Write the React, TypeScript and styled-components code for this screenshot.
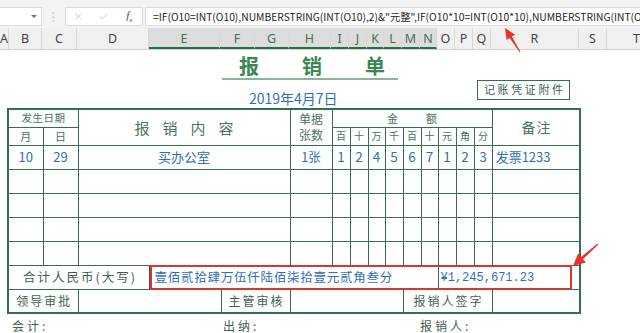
import React from "react";
import styled, { createGlobalStyle } from "styled-components";
import { X, Check } from "lucide-react";

const GlobalStyle = createGlobalStyle`
  html, body { margin: 0; padding: 0; background: #fff; }
  body {
    width: 640px;
    height: 333px;
    overflow: hidden;
    font-family: "Noto Sans CJK SC", "Noto Sans", sans-serif;
  }
`;

const LINE = "#336f50";
const LABEL = "#4a7260";
const BLUE = "#2f70b4";
const INK = "#3f5f4e";

const columns = [
  { name: "A", w: 9 },
  { name: "B", w: 33 },
  { name: "C", w: 35 },
  { name: "D", w: 72 },
  { name: "E", w: 71, sel: true },
  { name: "F", w: 35, sel: true },
  { name: "G", w: 34, sel: true },
  { name: "H", w: 42, sel: true },
  { name: "I", w: 18, sel: true },
  { name: "J", w: 18, sel: true },
  { name: "K", w: 17, sel: true },
  { name: "L", w: 18, sel: true },
  { name: "M", w: 18, sel: true },
  { name: "N", w: 17, sel: true },
  { name: "O", w: 18 },
  { name: "P", w: 18 },
  { name: "Q", w: 18 },
  { name: "R", w: 88 },
  { name: "S", w: 28 },
  { name: "T", w: 60 },
];

// widths of the form's own columns, B through R
const formCols = [35, 35, 72, 71, 35, 34, 42, 18, 18, 17, 18, 18, 17, 18, 18, 18, 88];
const units = ["百", "十", "万", "千", "百", "十", "元", "角", "分"];
const amount = ["1", "2", "4", "5", "6", "7", "1", "2", "3"];

const formula =
  '=IF(O10=INT(O10),NUMBERSTRING(INT(O10),2)&"元整",IF(O10*10=INT(O10*10),NUMBERSTRING(INT(O10)';

const Page = styled.div`
  position: relative;
  width: 640px;
  height: 333px;
  overflow: hidden;
`;

const Toolbar = styled.div`
  display: flex;
  align-items: flex-start;
  height: 28px;
  padding-top: 7px;
  box-sizing: border-box;
  background: #f3f3f3;
`;

const NameBox = styled.div`
  display: flex;
  align-items: center;
  justify-content: flex-end;
  width: 42px;
  height: 19px;
  box-sizing: border-box;
  background: #fff;
  border: 1px solid #dcdcdc;
  border-left: none;
`;

const Caret = styled.span`
  width: 0;
  height: 0;
  margin-right: 4px;
  border-left: 3px solid transparent;
  border-right: 3px solid transparent;
  border-top: 3px solid #707070;
`;

const Dots = styled.div`
  width: 23px;
  height: 19px;
  display: flex;
  align-items: center;
  justify-content: center;
  color: #bdbdbd;
  font: 12px "DejaVu Sans", sans-serif;
`;

const FxBox = styled.div`
  display: flex;
  width: 78px;
  height: 19px;
  box-sizing: border-box;
  background: #fff;
  border: 1px solid #dcdcdc;
`;

const FxSlot = styled.span`
  width: 26px;
  display: flex;
  align-items: center;
  justify-content: center;
  color: #ababab;
`;

const FxLabel = styled.span`
  font: italic 11px "Liberation Serif", serif;
  color: #4a4a4a;
  sub {
    font-size: 7px;
  }
`;

const FormulaBox = styled.div`
  flex: 1;
  height: 19px;
  margin-left: 2px;
  padding-left: 7px;
  box-sizing: border-box;
  background: #fff;
  border: 1px solid #dcdcdc;
  border-right: none;
  font-size: 10.3px;
  line-height: 17px;
  color: #262626;
  white-space: nowrap;
  overflow: hidden;
`;

const HeaderRow = styled.div`
  display: flex;
  height: 22px;
  box-sizing: border-box;
  background: #f0f0f0;
  border-bottom: 1px solid #d2d2d2;
`;

const ColHead = styled.div<{ $w: number; $sel?: boolean }>`
  flex: none;
  width: ${(p) => p.$w}px;
  box-sizing: border-box;
  border-right: 1px solid #d8d8d8;
  border-bottom: ${(p) => (p.$sel ? "2px solid #217346" : "none")};
  background: ${(p) => (p.$sel ? "#dcdcdc" : "transparent")};
  color: ${(p) => (p.$sel ? "#466e58" : "#444")};
  font: 12.5px "Noto Sans", sans-serif;
  line-height: 21px;
  text-align: center;
  overflow: hidden;
`;

const Sheet = styled.div`
  padding-left: 7px;
`;

const TitleArea = styled.div`
  display: grid;
  grid-template-columns: 470px 93px;
  grid-template-rows: 30px 28px;
`;

const Title = styled.div`
  grid-column: 1;
  grid-row: 1;
  align-self: end;
  display: flex;
  justify-content: space-between;
  width: 176px;
  margin-left: 215px;
  padding: 0 13px 0 17px;
  box-sizing: border-box;
  border-bottom: 2px solid #87b797;
  color: #3a8655;
  font-size: 20px;
  font-weight: 700;
  line-height: 25px;
`;

const DateText = styled.div`
  grid-column: 1;
  grid-row: 2;
  align-self: end;
  padding: 0 0 1px 242px;
  color: ${BLUE};
  font-size: 14px;
  line-height: 18px;
`;

const Stamp = styled.div`
  grid-column: 2;
  grid-row: 2;
  align-self: start;
  height: 20px;
  box-sizing: border-box;
  border: 1.5px solid #3c6d51;
  color: #40604f;
  font-size: 11px;
  letter-spacing: 2.6px;
  text-indent: 2.6px;
  line-height: 17px;
  text-align: center;
`;

const TableWrap = styled.div`
  position: relative;
  width: 572px;
`;

const Form = styled.table`
  width: 572px;
  border-collapse: collapse;
  table-layout: fixed;
  border: 2px solid ${LINE};
`;

const Row = styled.tr<{ $h: number }>`
  height: ${(p) => p.$h}px;
`;

const Cell = styled.td<{
  $size?: number;
  $color?: string;
  $spacing?: number;
  $align?: string;
  $leftLine?: string;
}>`
  padding: 0;
  border: 1px solid ${LINE};
  ${(p) => (p.$leftLine ? `border-left: 2px solid ${p.$leftLine};` : "")}
  color: ${(p) => p.$color || LABEL};
  font-size: ${(p) => p.$size || 12}px;
  letter-spacing: ${(p) => p.$spacing || 0}px;
  text-indent: ${(p) => (p.$align === "left" ? 0 : p.$spacing || 0)}px;
  text-align: ${(p) => p.$align || "center"};
  line-height: 1.15;
  white-space: nowrap;
  overflow: hidden;
`;

const StackLine = styled.div`
  height: 16px;
  line-height: 16px;
`;

const Remark = styled.span`
  padding-left: 3px;
`;

const Money = styled.span`
  padding-left: 2px;
  font-family: "Liberation Mono", monospace;
  font-size: 12px;
`;

const RedBox = styled.div`
  position: absolute;
  left: 143px;
  top: 157px;
  width: 422px;
  height: 25px;
  box-sizing: border-box;
  border: 2px solid #d8372f;
  pointer-events: none;
`;

const Footer = styled.div`
  display: grid;
  grid-template-columns: 211px 197px 1fr;
  padding-left: 5px;
  color: ${INK};
  font-size: 12px;
  letter-spacing: 3px;
  line-height: 24px;
`;

const Arrows = styled.svg`
  position: absolute;
  left: 0;
  top: 0;
  pointer-events: none;
`;

export default function App() {
  return (
    <Page>
      <GlobalStyle />
      <Toolbar>
        <NameBox>
          <Caret />
        </NameBox>
        <Dots>⋮</Dots>
        <FxBox>
          <FxSlot>
            <X size={11} strokeWidth={1.3} />
          </FxSlot>
          <FxSlot>
            <Check size={11} strokeWidth={1.3} />
          </FxSlot>
          <FxSlot>
            <FxLabel>
              f<sub>x</sub>
            </FxLabel>
          </FxSlot>
        </FxBox>
        <FormulaBox>{formula}</FormulaBox>
      </Toolbar>

      <HeaderRow>
        {columns.map((c) => (
          <ColHead key={c.name} $w={c.w} $sel={c.sel}>
            {c.name}
          </ColHead>
        ))}
      </HeaderRow>

      <Sheet>
        <TitleArea>
          <Title>
            <span>报</span>
            <span>销</span>
            <span>单</span>
          </Title>
          <DateText>2019年4月7日</DateText>
          <Stamp>记账凭证附件</Stamp>
        </TitleArea>

        <TableWrap>
          <Form>
            <colgroup>
              {formCols.map((w, i) => (
                <col key={i} style={{ width: w }} />
              ))}
            </colgroup>
            <tbody>
              <Row $h={18}>
                <Cell colSpan={2} $size={10.5} $spacing={0.5}>
                  发生日期
                </Cell>
                <Cell colSpan={4} rowSpan={2} $size={15} $spacing={13}>
                  报销内容
                </Cell>
                <Cell rowSpan={2} $size={12}>
                  <StackLine>单据</StackLine>
                  <StackLine>张数</StackLine>
                </Cell>
                <Cell colSpan={9} $size={11} $spacing={28}>
                  金额
                </Cell>
                <Cell rowSpan={2} $size={14} $spacing={1}>
                  备注
                </Cell>
              </Row>
              <Row $h={18}>
                <Cell $size={11}>月</Cell>
                <Cell $size={11}>日</Cell>
                {units.map((u, i) => (
                  <Cell key={i} $size={10}>
                    {u}
                  </Cell>
                ))}
              </Row>
              <Row $h={24}>
                <Cell $size={13} $color={BLUE}>
                  10
                </Cell>
                <Cell $size={13} $color={BLUE}>
                  29
                </Cell>
                <Cell colSpan={4} $size={13} $color={BLUE}>
                  买办公室
                </Cell>
                <Cell $size={12.5} $color={BLUE}>
                  1张
                </Cell>
                {amount.map((d, i) => (
                  <Cell key={i} $size={13.5} $color={BLUE}>
                    {d}
                  </Cell>
                ))}
                <Cell $size={13} $color={BLUE} $align="left">
                  <Remark>发票1233</Remark>
                </Cell>
              </Row>
              {[0, 1, 2, 3].map((r) => (
                <Row key={r} $h={24}>
                  <Cell />
                  <Cell />
                  <Cell colSpan={4} />
                  <Cell />
                  {units.map((_, i) => (
                    <Cell key={i} />
                  ))}
                  <Cell />
                </Row>
              ))}
              <Row $h={24}>
                <Cell colSpan={3} $size={12.5} $spacing={2} $color={INK}>
                  合计人民币(大写)
                </Cell>
                <Cell
                  colSpan={10}
                  $size={12.5}
                  $spacing={0.75}
                  $color={BLUE}
                  $align="left"
                  $leftLine="#1f5e3e"
                >
                  &nbsp;壹佰贰拾肆万伍仟陆佰柒拾壹元贰角叁分
                </Cell>
                <Cell colSpan={4} $color={BLUE} $align="left">
                  <Money>¥1,245,671.23</Money>
                </Cell>
              </Row>
              <Row $h={24}>
                <Cell colSpan={2} $size={12} $spacing={2} $color={INK}>
                  领导审批
                </Cell>
                <Cell colSpan={2} />
                <Cell colSpan={2} $size={12} $spacing={2} $color={INK}>
                  主管审核
                </Cell>
                <Cell colSpan={5} />
                <Cell colSpan={5} $size={12} $spacing={2} $color={INK}>
                  报销人签字
                </Cell>
                <Cell />
              </Row>
            </tbody>
          </Form>
          <RedBox />
        </TableWrap>

        <Footer>
          <span>会计:</span>
          <span>出纳:</span>
          <span>报销人:</span>
        </Footer>
      </Sheet>

      <Arrows width={640} height={333} viewBox="0 0 640 333">
        <polygon
          fill="#e5332a"
          points="505,28 515.1,34.7 511.9,36.6 520.4,51.8 519.6,52.2 509.7,38 506.6,40"
        />
        <polygon
          fill="#e5332a"
          points="573,266 586,262.6 583,259.2 598.4,244.4 597.6,243.6 581,257 578,253.6"
        />
      </Arrows>
    </Page>
  );
}
